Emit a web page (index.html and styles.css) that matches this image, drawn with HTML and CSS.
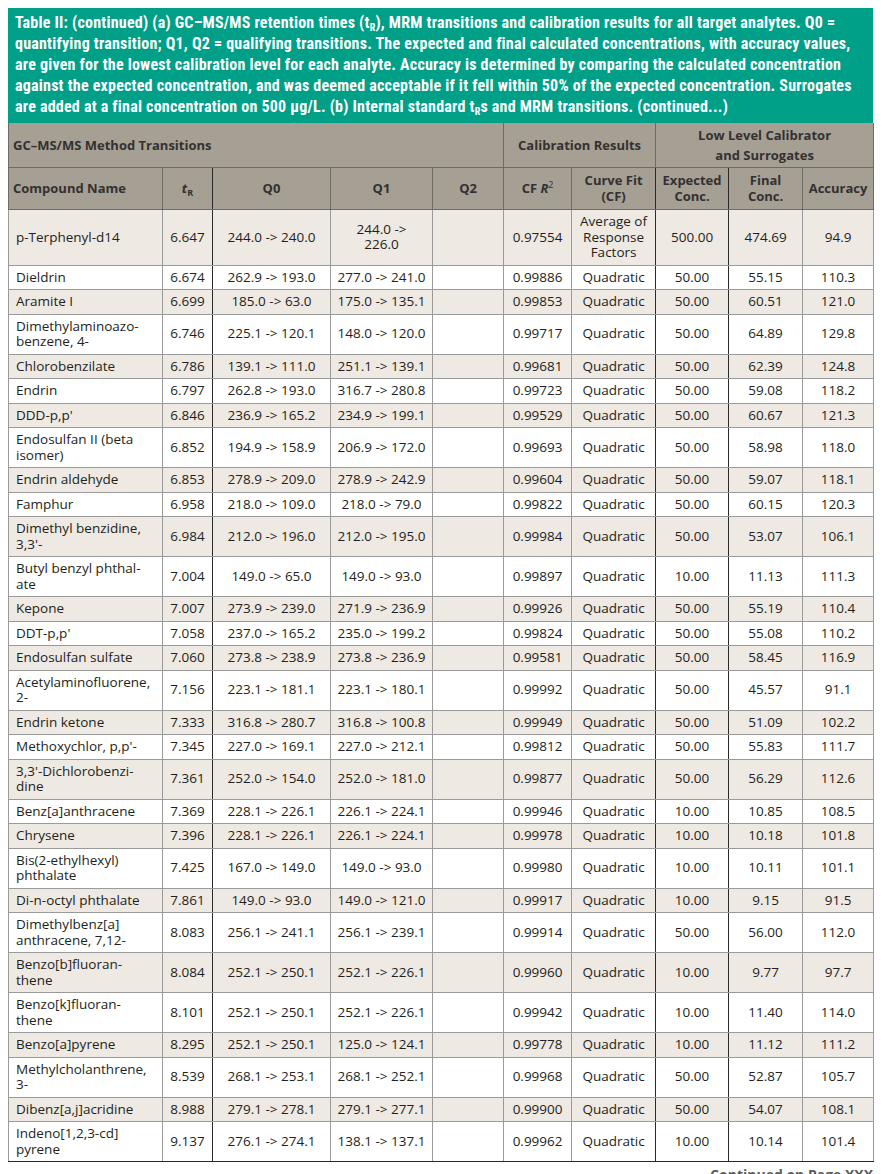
FILE: index.html
```html
<!DOCTYPE html>
<html>
<head>
<meta charset="utf-8">
<link rel="stylesheet" href="styles.css">
</head>
<body>
<div class="caption">
  <span class="cl">Table II: (continued) (a) GC–MS/MS retention times (t<sub>R</sub>), MRM transitions and calibration results for all target analytes. Q0 =</span>
  <span class="cl">quantifying transition; Q1, Q2 = qualifying transitions. The expected and final calculated concentrations, with accuracy values,</span>
  <span class="cl">are given for the lowest calibration level for each analyte. Accuracy is determined by comparing the calculated concentration</span>
  <span class="cl">against the expected concentration, and was deemed acceptable if it fell within 50% of the expected concentration. Surrogates</span>
  <span class="cl">are added at a final concentration on 500 µg/L. (b) Internal standard t<sub>R</sub>s and MRM transitions. (continued...)</span>
</div>
<table class="data">
  <colgroup>
    <col class="w-name"><col class="w-tr"><col class="w-q0"><col class="w-q1"><col class="w-q2">
    <col class="w-r2"><col class="w-cf"><col class="w-exp"><col class="w-fin"><col class="w-acc">
  </colgroup>
  <thead>
    <tr class="group">
      <th colspan="5" class="left">GC–MS/MS Method Transitions</th>
      <th colspan="2">Calibration Results</th>
      <th colspan="3" class="dk">Low Level Calibrator<br>and Surrogates</th>
    </tr>
    <tr class="cols">
      <th class="left">Compound Name</th>
      <th class="dkr"><i>t</i><sub>R</sub></th>
      <th>Q0</th>
      <th>Q1</th>
      <th>Q2</th>
      <th>CF <i>R</i><sup>2</sup></th>
      <th class="dkr">Curve Fit<br>(CF)</th>
      <th class="dkr">Expected<br>Conc.</th>
      <th>Final<br>Conc.</th>
      <th>Accuracy</th>
    </tr>
  </thead>
  <tbody>
    <tr><td>p-Terphenyl-d14</td><td>6.647</td><td>244.0 -&gt; 240.0</td><td>244.0 -&gt;<br>226.0</td><td></td><td>0.97554</td><td>Average of<br>Response<br>Factors</td><td>500.00</td><td>474.69</td><td>94.9</td></tr>
    <tr><td>Dieldrin</td><td>6.674</td><td>262.9 -&gt; 193.0</td><td>277.0 -&gt; 241.0</td><td></td><td>0.99886</td><td>Quadratic</td><td>50.00</td><td>55.15</td><td>110.3</td></tr>
    <tr><td>Aramite I</td><td>6.699</td><td>185.0 -&gt; 63.0</td><td>175.0 -&gt; 135.1</td><td></td><td>0.99853</td><td>Quadratic</td><td>50.00</td><td>60.51</td><td>121.0</td></tr>
    <tr><td>Dimethylaminoazo-<br>benzene, 4-</td><td>6.746</td><td>225.1 -&gt; 120.1</td><td>148.0 -&gt; 120.0</td><td></td><td>0.99717</td><td>Quadratic</td><td>50.00</td><td>64.89</td><td>129.8</td></tr>
    <tr><td>Chlorobenzilate</td><td>6.786</td><td>139.1 -&gt; 111.0</td><td>251.1 -&gt; 139.1</td><td></td><td>0.99681</td><td>Quadratic</td><td>50.00</td><td>62.39</td><td>124.8</td></tr>
    <tr><td>Endrin</td><td>6.797</td><td>262.8 -&gt; 193.0</td><td>316.7 -&gt; 280.8</td><td></td><td>0.99723</td><td>Quadratic</td><td>50.00</td><td>59.08</td><td>118.2</td></tr>
    <tr><td>DDD-p,p'</td><td>6.846</td><td>236.9 -&gt; 165.2</td><td>234.9 -&gt; 199.1</td><td></td><td>0.99529</td><td>Quadratic</td><td>50.00</td><td>60.67</td><td>121.3</td></tr>
    <tr><td>Endosulfan II (beta<br>isomer)</td><td>6.852</td><td>194.9 -&gt; 158.9</td><td>206.9 -&gt; 172.0</td><td></td><td>0.99693</td><td>Quadratic</td><td>50.00</td><td>58.98</td><td>118.0</td></tr>
    <tr><td>Endrin aldehyde</td><td>6.853</td><td>278.9 -&gt; 209.0</td><td>278.9 -&gt; 242.9</td><td></td><td>0.99604</td><td>Quadratic</td><td>50.00</td><td>59.07</td><td>118.1</td></tr>
    <tr><td>Famphur</td><td>6.958</td><td>218.0 -&gt; 109.0</td><td>218.0 -&gt; 79.0</td><td></td><td>0.99822</td><td>Quadratic</td><td>50.00</td><td>60.15</td><td>120.3</td></tr>
    <tr><td>Dimethyl benzidine,<br>3,3'-</td><td>6.984</td><td>212.0 -&gt; 196.0</td><td>212.0 -&gt; 195.0</td><td></td><td>0.99984</td><td>Quadratic</td><td>50.00</td><td>53.07</td><td>106.1</td></tr>
    <tr><td>Butyl benzyl phthal-<br>ate</td><td>7.004</td><td>149.0 -&gt; 65.0</td><td>149.0 -&gt; 93.0</td><td></td><td>0.99897</td><td>Quadratic</td><td>10.00</td><td>11.13</td><td>111.3</td></tr>
    <tr><td>Kepone</td><td>7.007</td><td>273.9 -&gt; 239.0</td><td>271.9 -&gt; 236.9</td><td></td><td>0.99926</td><td>Quadratic</td><td>50.00</td><td>55.19</td><td>110.4</td></tr>
    <tr><td>DDT-p,p'</td><td>7.058</td><td>237.0 -&gt; 165.2</td><td>235.0 -&gt; 199.2</td><td></td><td>0.99824</td><td>Quadratic</td><td>50.00</td><td>55.08</td><td>110.2</td></tr>
    <tr><td>Endosulfan sulfate</td><td>7.060</td><td>273.8 -&gt; 238.9</td><td>273.8 -&gt; 236.9</td><td></td><td>0.99581</td><td>Quadratic</td><td>50.00</td><td>58.45</td><td>116.9</td></tr>
    <tr><td>Acetylaminofluorene,<br>2-</td><td>7.156</td><td>223.1 -&gt; 181.1</td><td>223.1 -&gt; 180.1</td><td></td><td>0.99992</td><td>Quadratic</td><td>50.00</td><td>45.57</td><td>91.1</td></tr>
    <tr><td>Endrin ketone</td><td>7.333</td><td>316.8 -&gt; 280.7</td><td>316.8 -&gt; 100.8</td><td></td><td>0.99949</td><td>Quadratic</td><td>50.00</td><td>51.09</td><td>102.2</td></tr>
    <tr><td>Methoxychlor, p,p'-</td><td>7.345</td><td>227.0 -&gt; 169.1</td><td>227.0 -&gt; 212.1</td><td></td><td>0.99812</td><td>Quadratic</td><td>50.00</td><td>55.83</td><td>111.7</td></tr>
    <tr><td>3,3'-Dichlorobenzi-<br>dine</td><td>7.361</td><td>252.0 -&gt; 154.0</td><td>252.0 -&gt; 181.0</td><td></td><td>0.99877</td><td>Quadratic</td><td>50.00</td><td>56.29</td><td>112.6</td></tr>
    <tr><td>Benz[a]anthracene</td><td>7.369</td><td>228.1 -&gt; 226.1</td><td>226.1 -&gt; 224.1</td><td></td><td>0.99946</td><td>Quadratic</td><td>10.00</td><td>10.85</td><td>108.5</td></tr>
    <tr><td>Chrysene</td><td>7.396</td><td>228.1 -&gt; 226.1</td><td>226.1 -&gt; 224.1</td><td></td><td>0.99978</td><td>Quadratic</td><td>10.00</td><td>10.18</td><td>101.8</td></tr>
    <tr><td>Bis(2-ethylhexyl)<br>phthalate</td><td>7.425</td><td>167.0 -&gt; 149.0</td><td>149.0 -&gt; 93.0</td><td></td><td>0.99980</td><td>Quadratic</td><td>10.00</td><td>10.11</td><td>101.1</td></tr>
    <tr><td>Di-n-octyl phthalate</td><td>7.861</td><td>149.0 -&gt; 93.0</td><td>149.0 -&gt; 121.0</td><td></td><td>0.99917</td><td>Quadratic</td><td>10.00</td><td>9.15</td><td>91.5</td></tr>
    <tr><td>Dimethylbenz[a]<br>anthracene, 7,12-</td><td>8.083</td><td>256.1 -&gt; 241.1</td><td>256.1 -&gt; 239.1</td><td></td><td>0.99914</td><td>Quadratic</td><td>50.00</td><td>56.00</td><td>112.0</td></tr>
    <tr><td>Benzo[b]fluoran-<br>thene</td><td>8.084</td><td>252.1 -&gt; 250.1</td><td>252.1 -&gt; 226.1</td><td></td><td>0.99960</td><td>Quadratic</td><td>10.00</td><td>9.77</td><td>97.7</td></tr>
    <tr><td>Benzo[k]fluoran-<br>thene</td><td>8.101</td><td>252.1 -&gt; 250.1</td><td>252.1 -&gt; 226.1</td><td></td><td>0.99942</td><td>Quadratic</td><td>10.00</td><td>11.40</td><td>114.0</td></tr>
    <tr><td>Benzo[a]pyrene</td><td>8.295</td><td>252.1 -&gt; 250.1</td><td>125.0 -&gt; 124.1</td><td></td><td>0.99778</td><td>Quadratic</td><td>10.00</td><td>11.12</td><td>111.2</td></tr>
    <tr><td>Methylcholanthrene,<br>3-</td><td>8.539</td><td>268.1 -&gt; 253.1</td><td>268.1 -&gt; 252.1</td><td></td><td>0.99968</td><td>Quadratic</td><td>50.00</td><td>52.87</td><td>105.7</td></tr>
    <tr><td>Dibenz[a,j]acridine</td><td>8.988</td><td>279.1 -&gt; 278.1</td><td>279.1 -&gt; 277.1</td><td></td><td>0.99900</td><td>Quadratic</td><td>50.00</td><td>54.07</td><td>108.1</td></tr>
    <tr><td>Indeno[1,2,3-cd]<br>pyrene</td><td>9.137</td><td>276.1 -&gt; 274.1</td><td>138.1 -&gt; 137.1</td><td></td><td>0.99962</td><td>Quadratic</td><td>10.00</td><td>10.14</td><td>101.4</td></tr>
  </tbody>
</table>
<div class="continued">Continued on Page XXX</div>
</body>
</html>
```
FILE: styles.css
```css
html, body {
  margin: 0;
  padding: 0;
  background: #ffffff;
}
body {
  padding: 8px 0 0 8px;
  font-family: "Open Sans", "Noto Sans", sans-serif;
  color: #231f20;
}
.caption {
  width: 865px;
  box-sizing: border-box;
  background: #00a088;
  color: #ffffff;
  font-family: "Liberation Sans Narrow", "Roboto Condensed", "Roboto", sans-serif;
  font-weight: bold;
  font-size: 16px;
  letter-spacing: 0.22px;
  line-height: 21px;
  padding: 4px 7px 6px 7px;
}
.caption .cl {
  display: block;
  white-space: nowrap;
}
.caption sub {
  font-size: 10px;
  line-height: 0;
  vertical-align: -3px;
}
.data {
  width: 865px;
  table-layout: fixed;
  border-collapse: collapse;
  font-size: 13.5px;
  border-left: 1px solid #2a2a2a;
  border-right: 1px solid #2a2a2a;
  border-bottom: 1px solid #2a2a2a;
}
.w-name { width: 154px; }
.w-tr { width: 50px; }
.w-q0 { width: 118px; }
.w-q1 { width: 102px; }
.w-q2 { width: 71px; }
.w-r2 { width: 68px; }
.w-cf { width: 84px; }
.w-exp { width: 73px; }
.w-fin { width: 74px; }
.w-acc { width: 71px; }

.data th {
  background: #a69f93;
  color: #333131;
  font-weight: bold;
  font-size: 13px;
  text-align: center;
  border: 1px solid #6e6a64;
  white-space: nowrap;
}
.data th.left {
  text-align: left;
  padding-left: 7px;
}
.data tr.group th {
  line-height: 20px;
  padding: 2px 4px 2px 4px;
  height: 40px;
  border-top: none;
}
.data tr.group th.dk {
  border-left: 1px solid #2a2a2a;
}
.data tr.cols th {
  line-height: 15.5px;
  padding: 5px 4px 5px 4px;
}
.data th.dkr {
  border-right: 1px solid #2a2a2a;
}
.data th sub {
  font-size: 9px;
  line-height: 0;
  vertical-align: -3px;
}
.data th sup {
  font-size: 9px;
  font-weight: normal;
  line-height: 0;
  vertical-align: 5px;
}
.data td {
  line-height: 15.5px;
  padding: 4px 4px 4px 4px;
  text-align: center;
  border: 1px solid #9a9a9a;
  white-space: nowrap;
}
.data td:first-child {
  text-align: left;
  padding-left: 7px;
}
.data td:nth-child(2),
.data td:nth-child(7),
.data td:nth-child(8) {
  border-right: 1px solid #2a2a2a;
}
.data tbody tr:nth-child(odd) td {
  background: #efe9e3;
}
.data tbody tr:last-child td {
  border-bottom: 1px solid #2a2a2a;
}
.continued {
  width: 865px;
  text-align: right;
  margin-top: 3px;
  font-weight: bold;
  font-size: 14px;
  color: #5b5b5b;
}
```
